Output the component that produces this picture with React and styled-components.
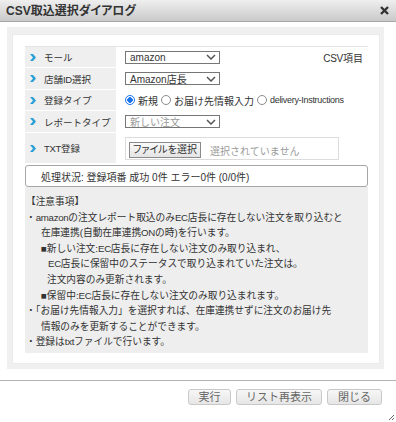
import styled, { createGlobalStyle } from "styled-components";

const GlobalStyle = createGlobalStyle`
  html, body {
    margin: 0;
    padding: 0;
    background: #fff;
  }
  body {
    font-family: "Liberation Sans", "Noto Sans CJK JP", sans-serif;
    color: #333;
  }
`;

const Dialog = styled.div`
  position: relative;
  width: 396px;
  height: 422px;
  display: flex;
  flex-direction: column;
  background: #fff;
  overflow: hidden;
`;

const TitleBar = styled.div`
  height: 22px;
  box-sizing: border-box;
  display: flex;
  align-items: center;
  justify-content: space-between;
  padding: 0 7px 0 6px;
  background: linear-gradient(#efefef, #c9c9c9);
  border-bottom: 1px solid #a8a8a8;
`;

const Title = styled.h1`
  margin: 0;
  font-size: 12px;
  font-weight: bold;
  color: #333;
  line-height: 1;
  font-feature-settings: "palt";
`;

const CloseButton = styled.button`
  border: none;
  background: none;
  padding: 0;
  width: 9px;
  height: 9px;
  display: flex;
  cursor: pointer;
`;

const Body = styled.div`
  padding: 5px 12px 0 7px;
`;

const Panel = styled.div`
  background: #f0f0f0;
  padding: 7px 4px 5px 5px;
`;

const Sheet = styled.div`
  background: #fff;
  height: 330px;
  box-sizing: border-box;
  padding: 11px 11px 0 12px;
  border: 1px solid #ebebeb;
`;

const FormTable = styled.div`
  border-top: 1px solid #e4e4e4;
  font-size: 10px;
`;

const FormRow = styled.div`
  display: grid;
  grid-template-columns: 91px 1fr;
  height: ${(p) => p.$h}px;
`;

const LabelCell = styled.div`
  display: flex;
  align-items: center;
  gap: 8px;
  padding-left: 5px;
  background: #efefef;
  border-bottom: 1px solid #fff;
  white-space: nowrap;
  font-size: 9.5px;
`;

const ValueCell = styled.div`
  display: flex;
  align-items: center;
  justify-content: ${(p) => (p.$spread ? "space-between" : "flex-start")};
  padding: 0 5px 0 9px;
  border-bottom: 1px solid #fff;
  white-space: nowrap;
`;

const SelectBox = styled.div`
  width: 95px;
  height: 13px;
  box-sizing: border-box;
  border: 1px solid #767676;
  display: flex;
  align-items: center;
  justify-content: space-between;
  padding: 0 3px 0 4px;
  font-size: 10px;
  color: ${(p) => (p.$muted ? "#9a9a9a" : "#333")};
`;

const SideNote = styled.span`
  font-size: 10px;
`;

const RadioDot = styled.span`
  width: 10px;
  height: 10px;
  box-sizing: border-box;
  border-radius: 50%;
  border: 1px solid ${(p) => (p.$on ? "#1a73e8" : "#8a8a8a")};
  background: ${(p) =>
    p.$on ? "radial-gradient(circle, #1a73e8 0 2.5px, #fff 3px)" : "#fff"};
  margin: 0 3px 0 ${(p) => (p.$first ? 0 : 3)}px;
  flex-shrink: 0;
`;

const RadioText = styled.span`
  font-size: ${(p) => (p.$latin ? 9 : 10)}px;
  letter-spacing: ${(p) => (p.$latin ? "-0.3px" : "normal")};
`;

const Latin = styled.span`
  letter-spacing: -0.3px;
`;

const FileField = styled.div`
  width: 214px;
  height: 23px;
  box-sizing: border-box;
  border: 1px solid #dcdcdc;
  display: flex;
  align-items: flex-end;
  gap: 9px;
  padding: 0 0 1px 3px;
`;

const FileButton = styled.button`
  width: 72px;
  height: 16px;
  box-sizing: border-box;
  border: 1px solid #8a8a8a;
  background: linear-gradient(#fafafa, #e4e4e4);
  font-family: inherit;
  font-size: 10px;
  font-feature-settings: "palt";
  color: #333;
  padding: 0;
  line-height: 1;
  white-space: nowrap;
`;

const FileHint = styled.span`
  font-size: 10px;
  color: #9a9a9a;
  align-self: center;
  padding-top: 5px;
`;

const StatusBox = styled.div`
  margin-top: 1px;
  height: 22px;
  box-sizing: border-box;
  border: 1px solid #a6a6a6;
  border-radius: 3px;
  display: flex;
  align-items: center;
  padding-left: 15px;
  font-size: 10px;
  white-space: pre;
`;

const Notes = styled.div`
  background: #eeeeee;
  height: 166px;
  box-sizing: border-box;
  padding: 7px 0 3px 1px;
  font-size: 9.7px;
  line-height: 15.6px;
`;

const NoteLine = styled.div`
  padding-left: ${(p) => p.$indent || 0}px;
  white-space: nowrap;
`;

const Footer = styled.div`
  margin-top: 11px;
  border-top: 1px solid #b3b3b3;
  display: flex;
  justify-content: flex-end;
  gap: 5px;
  padding: 8px 14px 0;
`;

const ActionButton = styled.button`
  width: ${(p) => p.$w}px;
  height: 16px;
  box-sizing: border-box;
  border: 1px solid #c8c8c8;
  border-radius: 3px;
  background: linear-gradient(#f7f7f7, #e6e6e6);
  font-family: inherit;
  font-size: 11px;
  color: #666;
  padding: 0;
  line-height: 1;
`;

const Grip = styled.svg`
  position: absolute;
  right: 1px;
  bottom: 1px;
`;

const withLatin = (text) =>
  text.split(/([A-Za-z]+)/).map((part, i) =>
    /^[A-Za-z]+$/.test(part) ? <Latin key={i}>{part}</Latin> : part
  );

const Chevron = () => (
  <svg width="6" height="7" viewBox="0 0 6 7">
    <path d="M0 0H3L6 3.5L3 7H0L3 3.5Z" fill="#2a9fd6" />
  </svg>
);

const Caret = () => (
  <svg width="10" height="6" viewBox="0 0 10 6">
    <path d="M1 1L5 5L9 1" fill="none" stroke="#555" strokeWidth="1.5" />
  </svg>
);

const Label = ({ children }) => (
  <LabelCell>
    <Chevron />
    <span>{children}</span>
  </LabelCell>
);

const notes = [
  ["【注意事項】", 0],
  ["・amazonの注文レポート取込のみEC店長に存在しない注文を取り込むと", 0],
  ["在庫連携(自動在庫連携ONの時)を行います。", 15],
  ["■新しい注文:EC店長に存在しない注文のみ取り込まれ、", 15],
  ["EC店長に保留中のステータスで取り込まれていた注文は。", 22],
  ["注文内容のみ更新されます。", 21],
  ["■保留中:EC店長に存在しない注文のみ取り込まれます。", 15],
  ["・「お届け先情報入力」を選択すれば、在庫連携せずに注文のお届け先", 0],
  ["情報のみを更新することができます。", 15],
  ["・登録はtxtファイルで行います。", 0],
];

const App = () => {
  return (
    <Dialog>
      <GlobalStyle />
      <TitleBar>
        <Title>CSV取込選択ダイアログ</Title>
        <CloseButton aria-label="close">
          <svg width="9" height="9" viewBox="0 0 9 9">
            <path d="M1 1L8 8M8 1L1 8" stroke="#333" strokeWidth="2.4" />
          </svg>
        </CloseButton>
      </TitleBar>
      <Body>
        <Panel>
          <Sheet>
            <FormTable>
              <FormRow $h={21}>
                <Label>モール</Label>
                <ValueCell $spread>
                  <SelectBox>
                    amazon
                    <Caret />
                  </SelectBox>
                  <SideNote>{withLatin("CSV項目")}</SideNote>
                </ValueCell>
              </FormRow>
              <FormRow $h={22}>
                <Label>{withLatin("店舗ID選択")}</Label>
                <ValueCell>
                  <SelectBox>
                    Amazon店長
                    <Caret />
                  </SelectBox>
                </ValueCell>
              </FormRow>
              <FormRow $h={21}>
                <Label>登録タイプ</Label>
                <ValueCell>
                  <RadioDot $on $first />
                  <RadioText>新規</RadioText>
                  <RadioDot />
                  <RadioText>お届け先情報入力</RadioText>
                  <RadioDot />
                  <RadioText $latin>delivery-Instructions</RadioText>
                </ValueCell>
              </FormRow>
              <FormRow $h={22}>
                <Label>レポートタイプ</Label>
                <ValueCell>
                  <SelectBox $muted>
                    新しい注文
                    <Caret />
                  </SelectBox>
                </ValueCell>
              </FormRow>
              <FormRow $h={31}>
                <Label>{withLatin("TXT登録")}</Label>
                <ValueCell>
                  <FileField>
                    <FileButton>ファイルを選択</FileButton>
                    <FileHint>選択されていません</FileHint>
                  </FileField>
                </ValueCell>
              </FormRow>
            </FormTable>
            <StatusBox>処理状況: 登録項番 成功 0件 エラー0件 (0/0件)</StatusBox>
            <Notes>
              {notes.map(([text, indent], i) => (
                <NoteLine key={i} $indent={indent}>
                  {withLatin(text)}
                </NoteLine>
              ))}
            </Notes>
          </Sheet>
        </Panel>
      </Body>
      <Footer>
        <ActionButton $w={43}>実行</ActionButton>
        <ActionButton $w={86}>リスト再表示</ActionButton>
        <ActionButton $w={55}>閉じる</ActionButton>
      </Footer>
      <Grip width="7" height="7" viewBox="0 0 7 7">
        <path d="M6 1L1 6M6 4L4 6" stroke="#666" strokeWidth="1" />
      </Grip>
    </Dialog>
  );
};

export default App;
